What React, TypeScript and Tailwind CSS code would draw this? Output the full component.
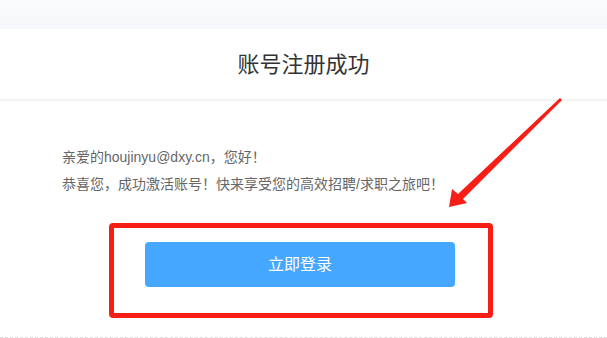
export default function App() {
  return (
    <div
      className="relative w-[607px] h-[338px] overflow-hidden bg-white"
      style={{ fontFamily: '"Liberation Sans", "Noto Sans CJK SC", sans-serif' }}
    >
      {/* top band */}
      <div className="h-[29px] bg-gradient-to-b from-[#fafbfc] to-[#f5f7fa]" />

      {/* title */}
      <div className="h-[70px] flex items-center justify-center">
        <h1 className="text-[22px] text-[#333] font-normal tracking-[0px]">账号注册成功</h1>
      </div>
      <div className="h-[2px] bg-[#f3f3f3]" />

      {/* message */}
      <div className="pl-[62px] pt-[43px] text-[14px] leading-[27px] text-[#666]">
        <p>亲爱的houjinyu@dxy.cn，您好！</p>
        <p>恭喜您，成功激活账号！快来享受您的高效招聘/求职之旅吧！</p>
      </div>

      {/* highlighted button area */}
      <div className="ml-[109px] mt-[25px] w-[384px] h-[95px] border-[5px] border-[#f71e16] rounded-[4px] pt-[14px] pl-[31px]">
        <button className="w-[310px] h-[45px] rounded-[4px] bg-[#45a7ff] text-white text-[16px] flex items-center justify-center">
          立即登录
        </button>
      </div>

      <div className="mt-[19px] border-t border-dashed border-[#dcdcdc]" />

      {/* annotation arrow */}
      <svg className="absolute left-0 top-0" width="607" height="338" viewBox="0 0 607 338">
        <polygon
          points="449,207 452,189 458,194 560,98 562,100 463,199 467,203"
          fill="#f71e16"
        />
      </svg>
    </div>
  )
}
